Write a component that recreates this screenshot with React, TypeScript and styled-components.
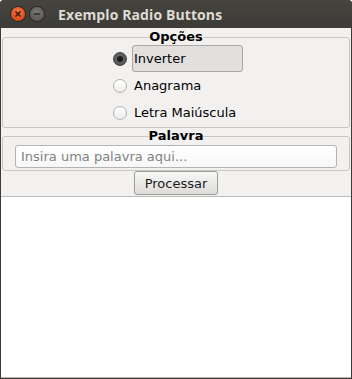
import styled, { createGlobalStyle } from 'styled-components';

const GlobalStyle = createGlobalStyle`
  html, body {
    margin: 0;
    padding: 0;
    background: #ffffff;
  }
  * {
    box-sizing: border-box;
  }
`;

const Window = styled.div`
  width: 352px;
  height: 379px;
  display: flex;
  flex-direction: column;
  background: #3c3b37;
  border-radius: 4px 4px 0 0;
  overflow: hidden;
`;

const TitleBar = styled.div`
  height: 28px;
  flex: none;
  display: flex;
  align-items: center;
  padding-left: 11px;
  gap: 5px;
  background: linear-gradient(#45443f, #3c3b37);
`;

const WinButton = styled.div<{ $kind: 'close' | 'min' }>`
  width: 14px;
  height: 14px;
  border-radius: 50%;
  display: flex;
  align-items: center;
  justify-content: center;
  background: ${(p) =>
    p.$kind === 'close'
      ? 'radial-gradient(circle at 50% 35%, #f47a4b, #df4a1c 70%, #b8380f)'
      : 'radial-gradient(circle at 50% 35%, #7a7974, #5c5b57 70%, #4a4945)'};
  box-shadow: 0 0 0 1px #2b2a27;
`;

const Title = styled.span`
  margin-left: 9px;
  font-family: 'Open Sans', 'DejaVu Sans', sans-serif;
  font-weight: 700;
  font-size: 14px;
  color: #dfdbd2;
  letter-spacing: 0.1px;
`;

const Body = styled.div`
  flex: 1;
  display: flex;
  flex-direction: column;
  margin: 0 1px 1px 1px;
  padding-top: 1px;
  background: #f2f1f0;
  font-family: 'DejaVu Sans', sans-serif;
  font-size: 13px;
  color: #000;
`;

const Group = styled.fieldset`
  margin: 0 1px;
  padding: 0 12px 1px 12px;
  border: 1px solid #c9c7c3;
  border-radius: 3px;
  min-width: 0;
`;

const Legend = styled.legend`
  margin: 0 auto;
  padding: 0;
  font-weight: 700;
  font-size: 13px;
  line-height: 16px;
  color: #000;
`;

const RadioList = styled.div`
  display: flex;
  flex-direction: column;
  align-items: center;
`;

const RadioRow = styled.label`
  display: flex;
  align-items: center;
  height: 27px;
  gap: 5px;
  padding-left: 4px;
`;

const RadioDot = styled.span<{ $checked?: boolean }>`
  width: 14px;
  height: 14px;
  border-radius: 50%;
  display: flex;
  align-items: center;
  justify-content: center;
  border: 1px solid ${(p) => (p.$checked ? '#3f3f3f' : '#b3b1ad')};
  background: ${(p) =>
    p.$checked
      ? 'radial-gradient(circle at 50% 40%, #6e6e6e, #4c4c4c)'
      : 'linear-gradient(#ffffff, #eeedec)'};
  &::after {
    content: '';
    display: ${(p) => (p.$checked ? 'block' : 'none')};
    width: 6px;
    height: 6px;
    border-radius: 50%;
    background: #1e1e1e;
  }
`;

const RadioLabel = styled.span<{ $focused?: boolean }>`
  width: 111px;
  height: 27px;
  display: flex;
  align-items: center;
  padding-left: 1px;
  border: 1px solid ${(p) => (p.$focused ? '#a9a8a5' : 'transparent')};
  border-radius: 3px;
  background: ${(p) => (p.$focused ? '#e1e0df' : 'transparent')};
`;

const TextInput = styled.input`
  display: block;
  width: 100%;
  height: 23px;
  margin: 1px 0 1px 0;
  padding: 0 5px;
  border: 1px solid #b5b3af;
  border-radius: 3px;
  background: linear-gradient(#ffffff, #f7f7f7);
  font-family: 'DejaVu Sans', sans-serif;
  font-size: 13px;
  color: #000;
  outline: none;
  &::placeholder {
    color: #828282;
  }
`;

const ButtonBar = styled.div`
  display: flex;
  justify-content: center;
  padding: 0 0 1px;
`;

const PushButton = styled.button`
  width: 84px;
  height: 24px;
  padding: 0;
  border: 1px solid #9c9b98;
  border-radius: 3px;
  background: linear-gradient(#f8f8f7, #dcdbd9);
  font-family: 'DejaVu Sans', sans-serif;
  font-size: 13px;
  color: #1a1a1a;
`;

const Output = styled.div`
  flex: 1;
  background: #ffffff;
  border-top: 1px solid #bdbbb7;
  border-bottom: 1px solid #b9b8b5;
`;

const options = ['Inverter', 'Anagrama', 'Letra Maiúscula'];

const App = () => {
  return (
    <>
      <GlobalStyle />
      <Window>
        <TitleBar>
          <WinButton $kind="close">
            <svg width="8" height="8" viewBox="0 0 8 8">
              <path d="M1.5 1.5 L6.5 6.5 M6.5 1.5 L1.5 6.5" stroke="#3a1a0e" strokeWidth="1.6" />
            </svg>
          </WinButton>
          <WinButton $kind="min">
            <svg width="8" height="8" viewBox="0 0 8 8">
              <path d="M1 4 L7 4" stroke="#2f2e2b" strokeWidth="1.6" />
            </svg>
          </WinButton>
          <Title>Exemplo Radio Buttons</Title>
        </TitleBar>
        <Body>
          <Group>
            <Legend>Opções</Legend>
            <RadioList>
              {options.map((opt, i) => (
                <RadioRow key={opt}>
                  <RadioDot $checked={i === 0} />
                  <RadioLabel $focused={i === 0}>{opt}</RadioLabel>
                </RadioRow>
              ))}
            </RadioList>
          </Group>
          <Group>
            <Legend>Palavra</Legend>
            <TextInput placeholder="Insira uma palavra aqui..." />
          </Group>
          <ButtonBar>
            <PushButton>Processar</PushButton>
          </ButtonBar>
          <Output />
        </Body>
      </Window>
    </>
  );
};

export default App;
